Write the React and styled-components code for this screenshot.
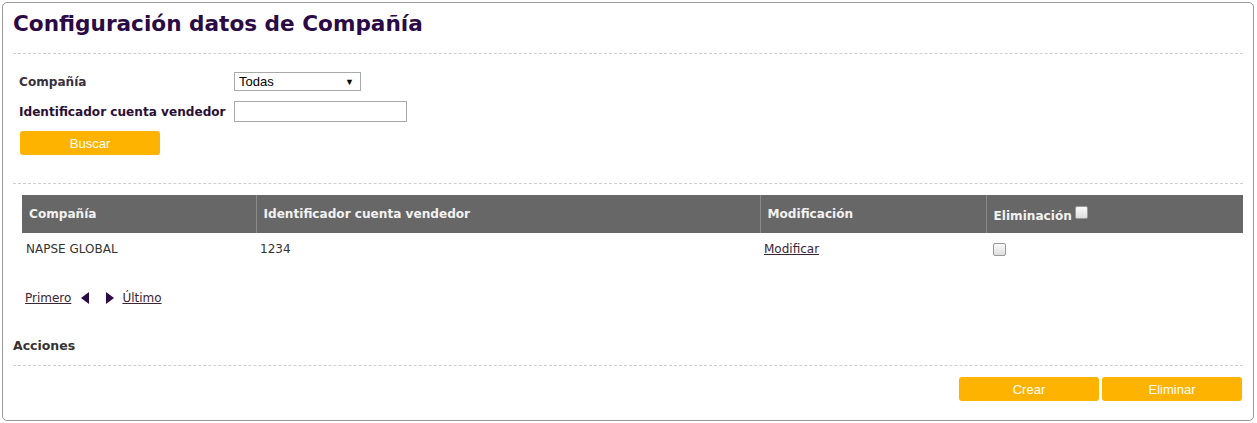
import React from 'react'
import styled, { createGlobalStyle } from 'styled-components'

const Global = createGlobalStyle`
  body {
    margin: 0;
    background: #fff;
    font-family: 'DejaVu Sans', Verdana, sans-serif;
  }
`

const Panel = styled.div`
  margin: 2px 3px 0 2px;
  height: 419px;
  box-sizing: border-box;
  border: 1px solid #9a9a9a;
  border-radius: 5px;
  padding: 0 10px 0 10px;
`

const Title = styled.h1`
  margin: 0;
  padding: 6px 0 0 0;
  height: 44px;
  font-size: 21.6px;
  line-height: 30px;
  font-weight: bold;
  color: #2b0a45;
`

const Divider = styled.div`
  border-top: 1px dashed #cfcfcf;
`

const Form = styled.div`
  padding: 18px 0 0 6px;
  display: flex;
  flex-direction: column;
  height: 111px;
`

const Row = styled.div`
  display: flex;
  align-items: center;
  height: ${p => p.$h}px;
  margin-top: ${p => p.$mt || 0}px;
  padding-left: ${p => p.$pl || 0}px;
`

const Label = styled.label`
  width: 215px;
  font-size: 12.1px;
  font-weight: bold;
  color: ${p => p.$dark ? '#2a0f36' : '#3a3040'};
`

const Select = styled.div`
  height: 17px;
  border: 1px solid #a9a9a9;
  display: flex;
  align-items: center;
  justify-content: space-between;
  padding: 0 6px 0 4px;
  box-sizing: content-box;
  font-family: 'Liberation Sans', Arial, sans-serif;
  font-size: 13px;
  color: #000;
  width: 115px;
`

const Caret = styled.span`
  font-size: 9px;
`

const Input = styled.input`
  width: 171px;
  height: 19px;
  box-sizing: content-box;
  padding: 0;
  border: 1px solid #a9a9a9;
  outline: none;
`

const Button = styled.button`
  width: 140px;
  height: 24px;
  border: none;
  border-radius: 3px;
  background: #feb300;
  color: #fff;
  font-family: 'Liberation Sans', Arial, sans-serif;
  font-size: 13px;
  padding: 0;
  cursor: pointer;
`

const Table = styled.table`
  margin: 11px 0 0 9px;
  width: 1221px;
  border-collapse: collapse;
  font-size: 12px;
`

const Th = styled.th`
  background: #676767;
  color: #f2f2f2;
  text-align: left;
  font-size: 12.1px;
  font-weight: bold;
  height: 38px;
  padding: 0 7px;
  border-left: 1px solid #8a8a8a;
  box-sizing: border-box;
  width: ${p => p.$w}px;
  &:first-child { border-left: none; }
`

const Td = styled.td`
  height: 32px;
  padding: 0 4px;
  color: #333;
  vertical-align: middle;
`

const Link = styled.a`
  color: #3a2436;
  text-decoration: underline;
  font-size: 12px;
  cursor: pointer;
  margin-left: ${p => p.$ml || 0}px;
`

const Check = styled.span`
  display: inline-block;
  width: 11px;
  height: 11px;
  border: 1px solid #999;
  border-radius: 2px;
  background: linear-gradient(#fafafa, #dedede);
  vertical-align: ${p => p.$top ? '1px' : 'middle'};
  margin-left: 3px;
`

const Pager = styled.div`
  display: flex;
  align-items: center;
  padding: 17px 0 0 12px;
  height: 32px;
`

const Arrow = styled.svg`
  width: 8px;
  height: 12px;
  margin-left: ${p => p.$ml}px;
`

const Section = styled.div`
  padding: 24px 0 0 0;
  height: 27px;
  font-size: 12.5px;
  font-weight: bold;
  color: #333;
`

const Actions = styled.div`
  display: flex;
  justify-content: flex-end;
  gap: 3px;
  padding: 11px 1px 0 0;
`

export default function App() {
  return (
    <>
      <Global />
      <Panel>
        <Title>Configuración datos de Compañía</Title>
        <Divider />
        <Form>
          <Row $h={19}>
            <Label>Compañía</Label>
            <Select>Todas<Caret>▼</Caret></Select>
          </Row>
          <Row $h={21} $mt={10}>
            <Label $dark>Identificador cuenta vendedor</Label>
            <Input />
          </Row>
          <Row $h={24} $mt={9} $pl={1}>
            <Button>Buscar</Button>
          </Row>
        </Form>
        <Divider />
        <Table>
          <thead>
            <tr>
              <Th $w={234}>Compañía</Th>
              <Th $w={504}>Identificador cuenta vendedor</Th>
              <Th $w={226}>Modificación</Th>
              <Th $w={257}>Eliminación<Check $top /></Th>
            </tr>
          </thead>
          <tbody>
            <tr>
              <Td>NAPSE GLOBAL</Td>
              <Td>1234</Td>
              <Td><Link>Modificar</Link></Td>
              <Td><Check /></Td>
            </tr>
          </tbody>
        </Table>
        <Pager>
          <Link>Primero</Link>
          <Arrow $ml={10} viewBox="0 0 8 12"><path d="M8 0 L0 6 L8 12 Z" fill="#2b0a45" /></Arrow>
          <Arrow $ml={17} viewBox="0 0 8 12"><path d="M0 0 L8 6 L0 12 Z" fill="#2b0a45" /></Arrow>
          <Link $ml={8}>Último</Link>
        </Pager>
        <Section>Acciones</Section>
        <Divider />
        <Actions>
          <Button>Crear</Button>
          <Button>Eliminar</Button>
        </Actions>
      </Panel>
    </>
  )
}
